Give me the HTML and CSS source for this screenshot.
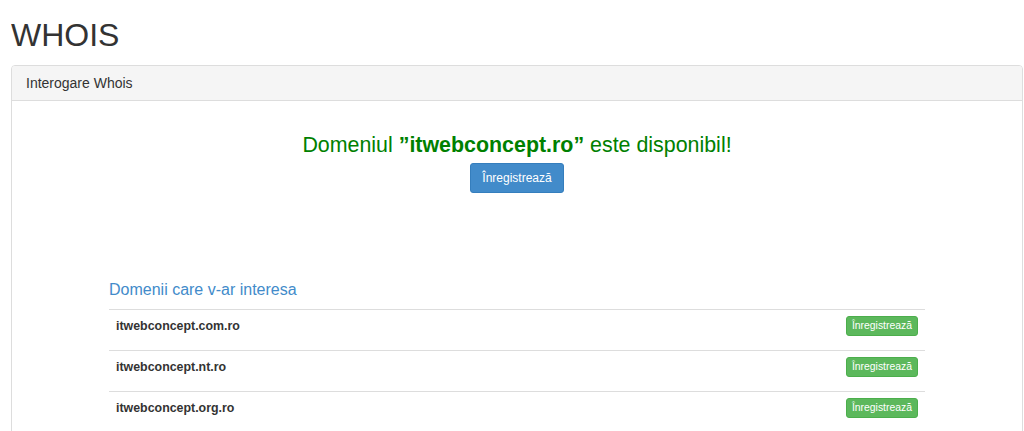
FILE: index.html
```html
<!DOCTYPE html>
<html lang="ro">
<head>
  <meta charset="UTF-8" />
  <meta name="viewport" content="width=device-width, initial-scale=1.0" />
  <title>WHOIS</title>
  <link rel="stylesheet" href="styles.css">
</head>
<body>
  <h1>WHOIS</h1>
  <div class="panel">
    <div class="panel-heading">Interogare Whois</div>
    <div class="panel-body">
      <h3 class="result">Domeniul <b>”itwebconcept.ro”</b> este disponibil!</h3>
      <div class="center">
        <button class="btn btn-primary">Înregistrează</button>
      </div>

      <div class="suggest">
        <h4>Domenii care v-ar interesa</h4>
        <table>
          <tr>
            <td class="name">itwebconcept.com.ro</td>
            <td class="act"><button class="btn btn-success">Înregistrează</button></td>
          </tr>
          <tr>
            <td class="name">itwebconcept.nt.ro</td>
            <td class="act"><button class="btn btn-success">Înregistrează</button></td>
          </tr>
          <tr>
            <td class="name">itwebconcept.org.ro</td>
            <td class="act"><button class="btn btn-success">Înregistrează</button></td>
          </tr>
        </table>
      </div>
    </div>
  </div>
</body>
</html>
```

FILE: styles.css
```css
body { font-family: "Liberation Sans", Arial, sans-serif; font-size: 14px; color: #333; margin: 0 1px 0 11px; background: #fff; }
h1 { font-size: 32px; font-weight: normal; margin: 0; padding: 15px 0 10px; line-height: 40px; }
.panel { border: 1px solid #ddd; border-radius: 4px; box-shadow: 0 1px 1px rgba(0,0,0,0.05); }
.panel-heading { background: #f5f5f5; border-bottom: 1px solid #ddd; padding: 8px 14px; line-height: 18px; border-radius: 3px 3px 0 0; }
.panel-body { padding: 30px 15px 40px; }
.result { text-align: center; color: #008000; font-size: 21.4px; font-weight: normal; margin: 0 0 4px; line-height: 28px; }
.center { text-align: center; }
.btn { font-family: inherit; border: 1px solid transparent; color: #fff; cursor: pointer; }
.btn-primary { background: #428bca; border-color: #357ebd; font-size: 12px; padding: 6px 11px; line-height: 16px; border-radius: 3px; }
.btn-success { background: #5cb85c; border-color: #4cae4c; font-size: 10.4px; padding: 2px 5px; line-height: 14px; border-radius: 3px; vertical-align: top; }
.suggest { width: 816px; margin: 86px auto 0; }
.suggest h4 { color: #428bca; font-size: 16px; font-weight: normal; margin: 0 0 8px; line-height: 22px; }
table { width: 100%; border-collapse: collapse; }
td { border-top: 1px solid #ddd; padding: 6px 7px 14px; vertical-align: top; line-height: 20px; }
.name { font-weight: bold; font-size: 12.4px; }
.act { text-align: right; }
```
